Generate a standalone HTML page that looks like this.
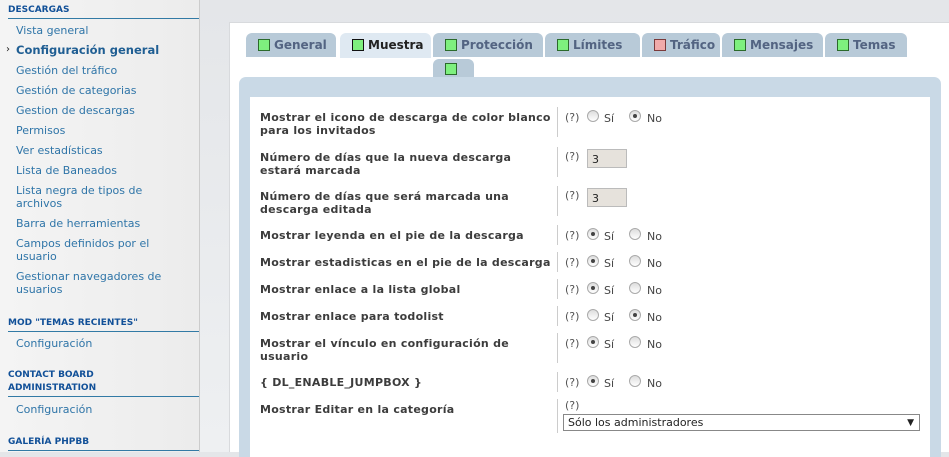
<!DOCTYPE html>
<html><head><meta charset="utf-8"><style>
*{margin:0;padding:0;box-sizing:border-box}
body{width:949px;height:452px;overflow:hidden;position:relative;background:linear-gradient(#e4e6e9,#eef0f2);font-family:"DejaVu Sans","Liberation Sans",sans-serif}
.a{position:absolute;white-space:nowrap}
#side{position:absolute;left:0;top:0;width:200px;height:452px;background:linear-gradient(90deg,#f4f4f4,#ececec);border-right:1px solid #ccc}
.h{position:absolute;left:8px;width:191px;font-size:9px;font-weight:bold;color:#115098;border-bottom:1px solid #327aa5;line-height:14px;padding-bottom:1px}
.l{position:absolute;left:16px;font-size:11px;color:#2f75a8;line-height:13px;white-space:nowrap}
#white{position:absolute;left:229px;top:22px;width:720px;height:430px;background:#fff;border-top:1px solid #d8dadd;border-left:1px solid #d8dadd}
.tab{position:absolute;top:33px;height:24px;background:#b8cad8;border-radius:6px 6px 0 0;font-size:12px;font-weight:bold;color:#536482;padding-left:12px;line-height:25px;white-space:nowrap}
.tab i{display:inline-block;width:12px;height:12px;background:#7ef07e;border:1px solid #2b6a2b;vertical-align:-2px;margin-right:4px}
#blue{position:absolute;left:239px;top:77px;width:702px;height:380px;background:#c9d9e6;border-radius:7px 7px 0 0}
#inner{position:absolute;left:250px;top:97px;width:680px;height:360px;background:#fff}
.lb{position:absolute;left:260px;font-size:11px;font-weight:bold;color:#3c3c3c;line-height:13px;white-space:nowrap;letter-spacing:0.27px}
.sep{position:absolute;left:557px;width:1px;background:#ccc}
.q{position:absolute;left:565px;font-size:11px;color:#555;white-space:nowrap}
.r{position:absolute;width:12px;height:12px;border-radius:50%;border:1px solid #aaa;background:linear-gradient(#ddd,#fff)}
.r.on::after{content:"";position:absolute;left:3px;top:3px;width:4px;height:4px;border-radius:50%;background:#444}
.t{position:absolute;font-size:11px;color:#444}
.in{position:absolute;left:587px;width:40px;height:19px;background:#e6e2dc;border:1px solid #bbb;font-size:11px;padding:3px 4px;color:#222}
</style></head><body>
<div id="side">
<div class="h" style="top:3px">DESCARGAS</div>
<div class="l" style="top:24px">Vista general</div>
<div class="l" style="top:44px;font-weight:bold;font-size:11.5px;color:#1f5e93">Configuración general</div>
<div class="a" style="left:6px;top:44px;font-size:10px;color:#222">›</div>
<div class="l" style="top:64px">Gestión del tráfico</div>
<div class="l" style="top:84px">Gestión de categorias</div>
<div class="l" style="top:104px">Gestion de descargas</div>
<div class="l" style="top:124px">Permisos</div>
<div class="l" style="top:144px">Ver estadísticas</div>
<div class="l" style="top:164px">Lista de Baneados</div>
<div class="l" style="top:184px">Lista negra de tipos de<br>archivos</div>
<div class="l" style="top:217px">Barra de herramientas</div>
<div class="l" style="top:237px">Campos definidos por el<br>usuario</div>
<div class="l" style="top:270px">Gestionar navegadores de<br>usuarios</div>
<div class="h" style="top:316px">MOD "TEMAS RECIENTES"</div>
<div class="l" style="top:337px">Configuración</div>
<div class="h" style="top:369px;line-height:13px">CONTACT BOARD<br>ADMINISTRATION</div>
<div class="l" style="top:403px">Configuración</div>
<div class="h" style="top:435px">GALERÍA PHPBB</div>
</div>
<div id="white"></div>
<div class="tab" style="left:246px;width:90px"><i></i>General</div>
<div class="tab" style="left:340px;width:91px;background:#dfe9f2;color:#222;height:25px"><i style="border-color:#111"></i>Muestra</div>
<div class="tab" style="left:433px;width:110px"><i></i>Protección</div>
<div class="tab" style="left:545px;width:95px"><i></i>Límites</div>
<div class="tab" style="left:642px;width:78px"><i style="background:#f0aaaa;border-color:#7a3a3a"></i>Tráfico</div>
<div class="tab" style="left:722px;width:101px"><i></i>Mensajes</div>
<div class="tab" style="left:825px;width:82px"><i></i>Temas</div>
<div class="tab" style="left:433px;top:59px;width:41px;height:19px;line-height:20px"><i></i></div>
<div id="blue"></div>
<div id="inner"></div>

<div class="lb" style="top:111px">Mostrar el icono de descarga de color blanco<br>para los invitados</div>
<div class="sep" style="top:107px;height:30px"></div>
<div class="q" style="top:111px">(?)</div>
<div class="r" style="left:587px;top:110px"></div><div class="t" style="left:604px;top:112px">Sí</div>
<div class="r on" style="left:629px;top:110px"></div><div class="t" style="left:647px;top:112px">No</div>

<div class="lb" style="top:151px">Número de días que la nueva descarga<br>estará marcada</div>
<div class="sep" style="top:147px;height:30px"></div>
<div class="q" style="top:150px">(?)</div><div class="in" style="top:149px">3</div>

<div class="lb" style="top:190px">Número de días que será marcada una<br>descarga editada</div>
<div class="sep" style="top:186px;height:30px"></div>
<div class="q" style="top:189px">(?)</div><div class="in" style="top:188px">3</div>

<div class="lb" style="top:229px">Mostrar leyenda en el pie de la descarga</div>
<div class="sep" style="top:225px;height:20px"></div>
<div class="q" style="top:229px">(?)</div>
<div class="r on" style="left:587px;top:228px"></div><div class="t" style="left:604px;top:230px">Sí</div>
<div class="r" style="left:629px;top:228px"></div><div class="t" style="left:647px;top:230px">No</div>

<div class="lb" style="top:256px">Mostrar estadisticas en el pie de la descarga</div>
<div class="sep" style="top:252px;height:20px"></div>
<div class="q" style="top:256px">(?)</div>
<div class="r on" style="left:587px;top:255px"></div><div class="t" style="left:604px;top:257px">Sí</div>
<div class="r" style="left:629px;top:255px"></div><div class="t" style="left:647px;top:257px">No</div>

<div class="lb" style="top:283px">Mostrar enlace a la lista global</div>
<div class="sep" style="top:279px;height:20px"></div>
<div class="q" style="top:283px">(?)</div>
<div class="r on" style="left:587px;top:282px"></div><div class="t" style="left:604px;top:284px">Sí</div>
<div class="r" style="left:629px;top:282px"></div><div class="t" style="left:647px;top:284px">No</div>

<div class="lb" style="top:310px">Mostrar enlace para todolist</div>
<div class="sep" style="top:306px;height:20px"></div>
<div class="q" style="top:310px">(?)</div>
<div class="r" style="left:587px;top:309px"></div><div class="t" style="left:604px;top:311px">Sí</div>
<div class="r on" style="left:629px;top:309px"></div><div class="t" style="left:647px;top:311px">No</div>

<div class="lb" style="top:337px">Mostrar el vínculo en configuración de<br>usuario</div>
<div class="sep" style="top:333px;height:30px"></div>
<div class="q" style="top:337px">(?)</div>
<div class="r on" style="left:587px;top:336px"></div><div class="t" style="left:604px;top:338px">Sí</div>
<div class="r" style="left:629px;top:336px"></div><div class="t" style="left:647px;top:338px">No</div>

<div class="lb" style="top:376px">{ DL_ENABLE_JUMPBOX }</div>
<div class="sep" style="top:372px;height:20px"></div>
<div class="q" style="top:376px">(?)</div>
<div class="r on" style="left:587px;top:375px"></div><div class="t" style="left:604px;top:377px">Sí</div>
<div class="r" style="left:629px;top:375px"></div><div class="t" style="left:647px;top:377px">No</div>

<div class="lb" style="top:403px">Mostrar Editar en la categoría</div>
<div class="sep" style="top:399px;height:34px"></div>
<div class="q" style="top:399px">(?)</div>
<div class="a" style="left:563px;top:414px;width:357px;height:17px;border:1px solid #888;font-size:11px;color:#222;padding:1px 4px;line-height:14px">Sólo los administradores<span style="position:absolute;right:5px;top:1px;font-size:9px">▼</span></div>
</body></html>
